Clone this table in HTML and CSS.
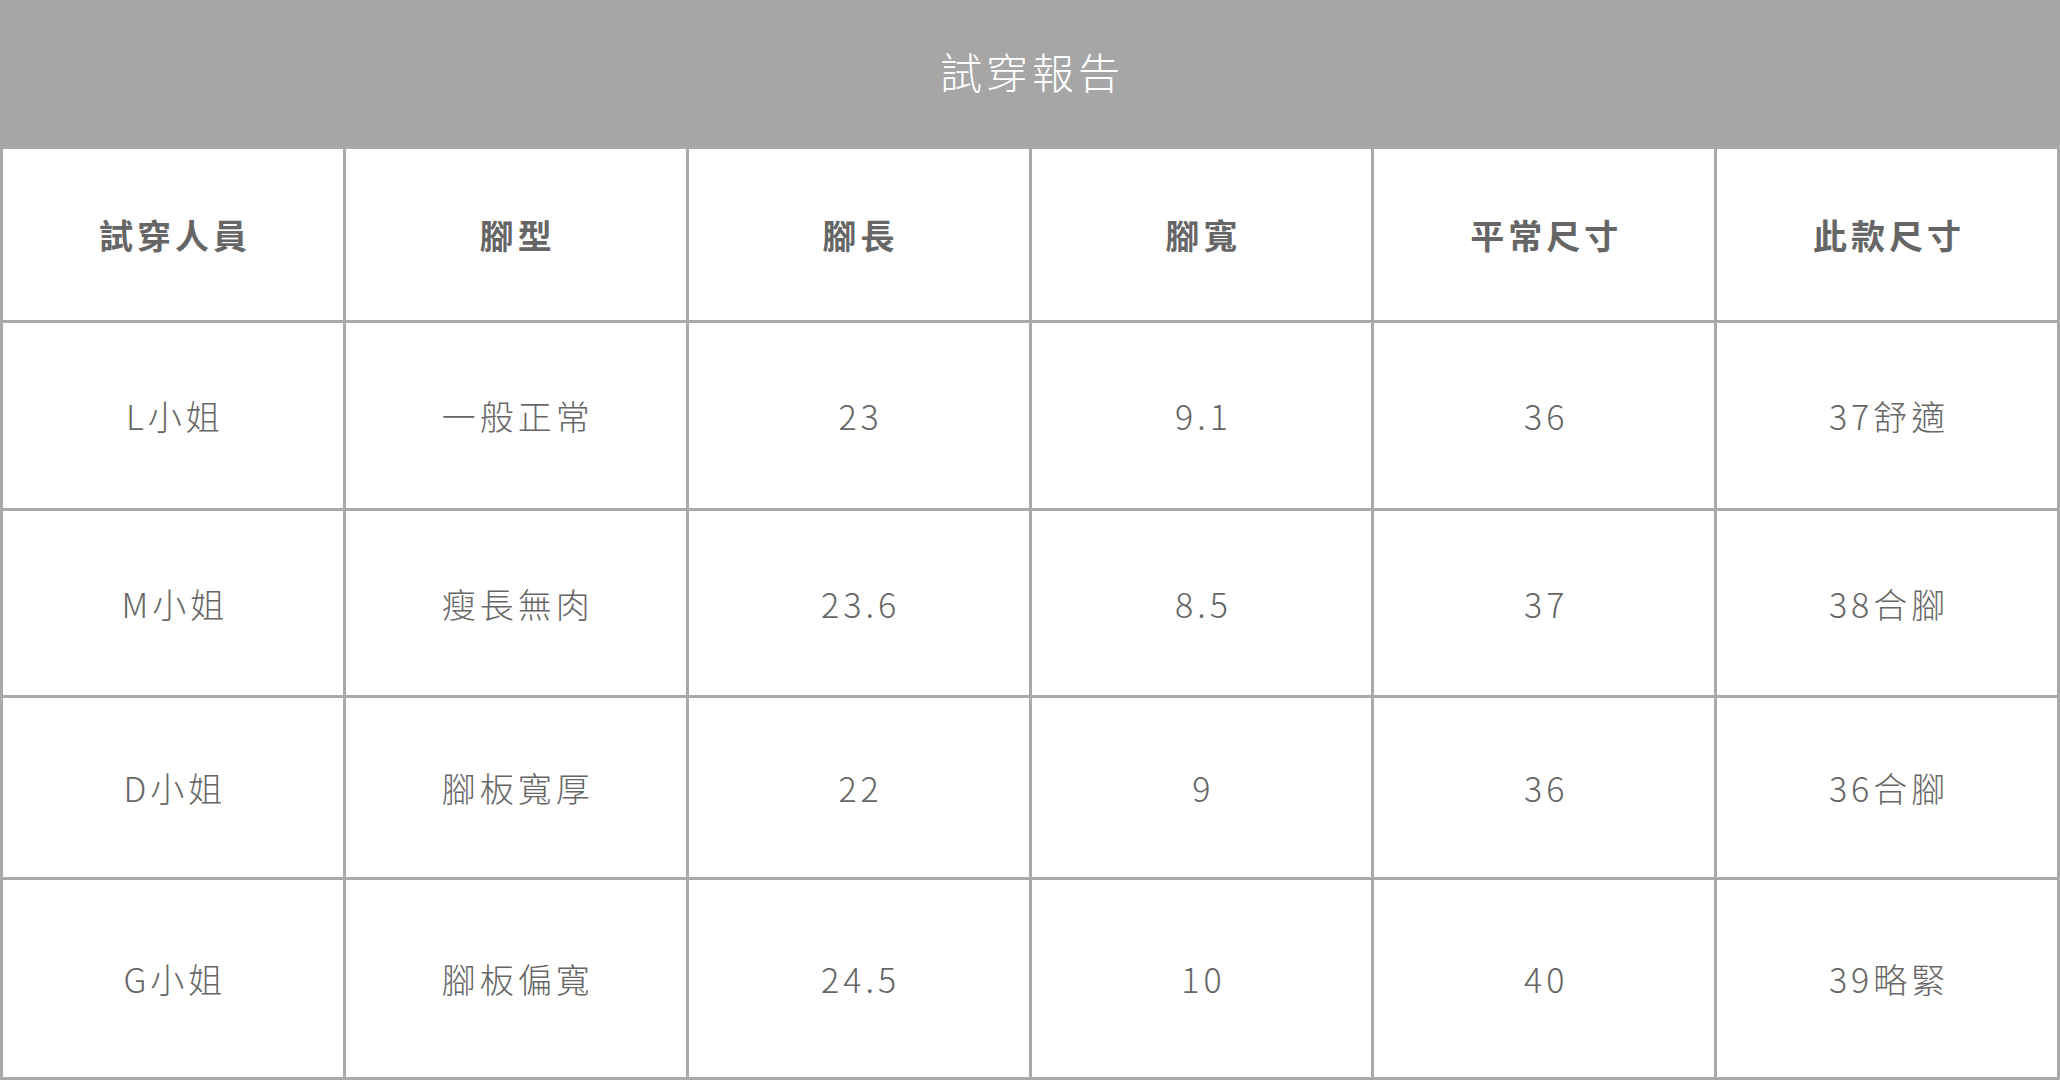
FILE: index.html
```html
<!DOCTYPE html>
<html lang="zh-Hant">
<head>
<meta charset="utf-8">
<title>試穿報告</title>
<link rel="stylesheet" href="styles.css">
</head>
<body>
<div class="report">
  <div class="report-title">試穿報告</div>
  <div class="report-grid">
    <div class="cell head">試穿人員</div>
    <div class="cell head">腳型</div>
    <div class="cell head">腳長</div>
    <div class="cell head">腳寬</div>
    <div class="cell head">平常尺寸</div>
    <div class="cell head">此款尺寸</div>

    <div class="cell">L小姐</div>
    <div class="cell">一般正常</div>
    <div class="cell">23</div>
    <div class="cell">9.1</div>
    <div class="cell">36</div>
    <div class="cell">37舒適</div>

    <div class="cell">M小姐</div>
    <div class="cell">瘦長無肉</div>
    <div class="cell">23.6</div>
    <div class="cell">8.5</div>
    <div class="cell">37</div>
    <div class="cell">38合腳</div>

    <div class="cell">D小姐</div>
    <div class="cell">腳板寬厚</div>
    <div class="cell">22</div>
    <div class="cell">9</div>
    <div class="cell">36</div>
    <div class="cell">36合腳</div>

    <div class="cell">G小姐</div>
    <div class="cell">腳板偏寬</div>
    <div class="cell">24.5</div>
    <div class="cell">10</div>
    <div class="cell">40</div>
    <div class="cell">39略緊</div>
  </div>
</div>
</body>
</html>
```

FILE: styles.css
```css
html, body {
  margin: 0;
  padding: 0;
  background: #ffffff;
}

body {
  font-family: "Noto Sans CJK TC", "Noto Sans", sans-serif;
  color: #666666;
}

.report {
  width: 2060px;
  height: 1080px;
  display: flex;
  flex-direction: column;
}

.report-title {
  height: 146px;
  background: #a6a6a6;
  color: #ffffff;
  font-size: 42px;
  font-weight: 300;
  letter-spacing: 4px;
  display: flex;
  align-items: center;
  justify-content: center;
  padding-left: 4px;
  padding-bottom: 6px;
  box-sizing: border-box;
}

.report-grid {
  display: grid;
  grid-template-columns: repeat(6, 1fr);
  grid-template-rows: 171px 185px 184px 179px 197px;
  gap: 3px;
  padding: 3px;
  background: #a9a9a9;
}

.cell {
  background: #ffffff;
  display: flex;
  align-items: center;
  justify-content: center;
  font-size: 34px;
  font-weight: 300;
  letter-spacing: 4px;
  padding-left: 4px;
}

.cell.head {
  font-weight: 700;
  font-size: 34px;
  letter-spacing: 4px;
}
```
